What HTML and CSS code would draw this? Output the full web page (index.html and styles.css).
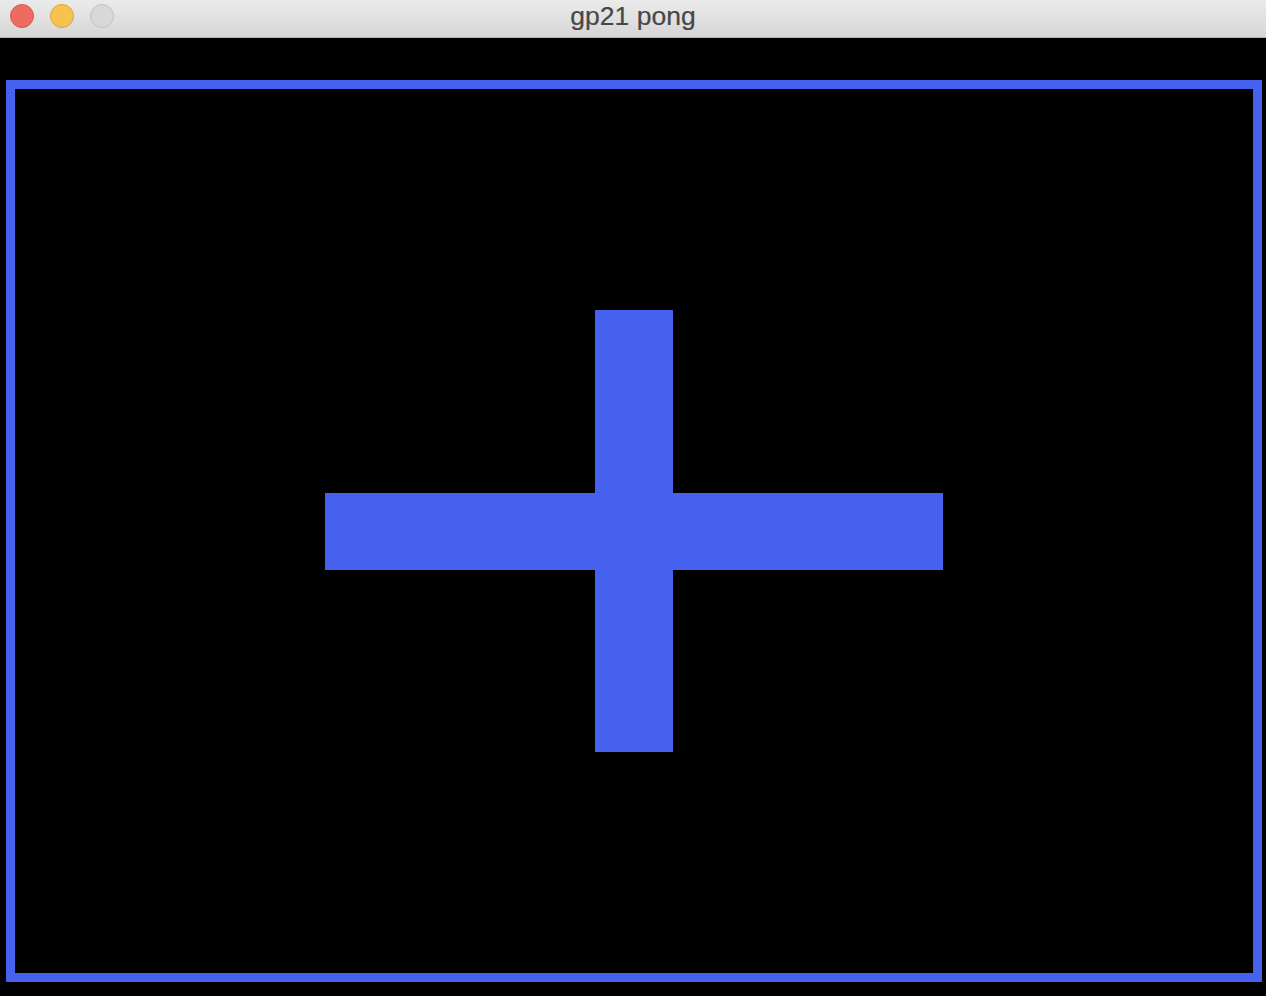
FILE: index.html
```html
<!DOCTYPE html>
<html>
<head>
<meta charset="utf-8">
<title>gp21 pong</title>
<link rel="stylesheet" href="styles.css">
</head>
<body>
<div class="window">
  <div class="titlebar">
    <div class="lights">
      <span class="light red"></span>
      <span class="light yellow"></span>
      <span class="light gray"></span>
    </div>
    <div class="title">gp21 pong</div>
  </div>
  <div class="screen">
    <div class="field">
      <div class="cross">
        <div class="bar vbar"></div>
        <div class="bar hbar"></div>
      </div>
    </div>
  </div>
</div>
</body>
</html>
```
FILE: styles.css
```css
html, body {
  margin: 0;
  padding: 0;
  background: #000;
}
.window {
  width: 1266px;
  height: 996px;
  display: flex;
  flex-direction: column;
  background: #000;
}
.titlebar {
  height: 37px;
  border-bottom: 1px solid #b4b4b4;
  background: linear-gradient(#ebebeb, #d6d6d6);
  position: relative;
  display: flex;
  align-items: center;
  justify-content: center;
  flex-shrink: 0;
}
.lights {
  position: absolute;
  left: 10px;
  top: 4px;
  display: flex;
  gap: 16px;
}
.light {
  width: 22px;
  height: 22px;
  border-radius: 50%;
  border: 1px solid transparent;
  display: block;
}
.red { background: #ee6b60; border-color: #d65a4f; }
.yellow { background: #f6c250; border-color: #d9a441; }
.gray { background: #d8d8d8; border-color: #c2c2c2; }
.title {
  font-family: "Helvetica Neue", "Liberation Sans", Arial, sans-serif;
  font-size: 26.5px;
  color: #474747;
  line-height: 1;
  margin-top: -4px;
  -webkit-text-stroke: 0.2px #474747;
}
.screen {
  padding: 42px 0 0 6px;
}
.field {
  width: 1238px;
  height: 884px;
  border: 9px solid #4561ee;
  display: grid;
  place-items: center;
}
.cross {
  width: 618px;
  height: 442px;
  display: grid;
  place-items: center;
}
.bar {
  grid-area: 1 / 1;
  background: #4561ee;
}
.vbar {
  width: 78px;
  height: 442px;
}
.hbar {
  width: 618px;
  height: 77px;
}
```
